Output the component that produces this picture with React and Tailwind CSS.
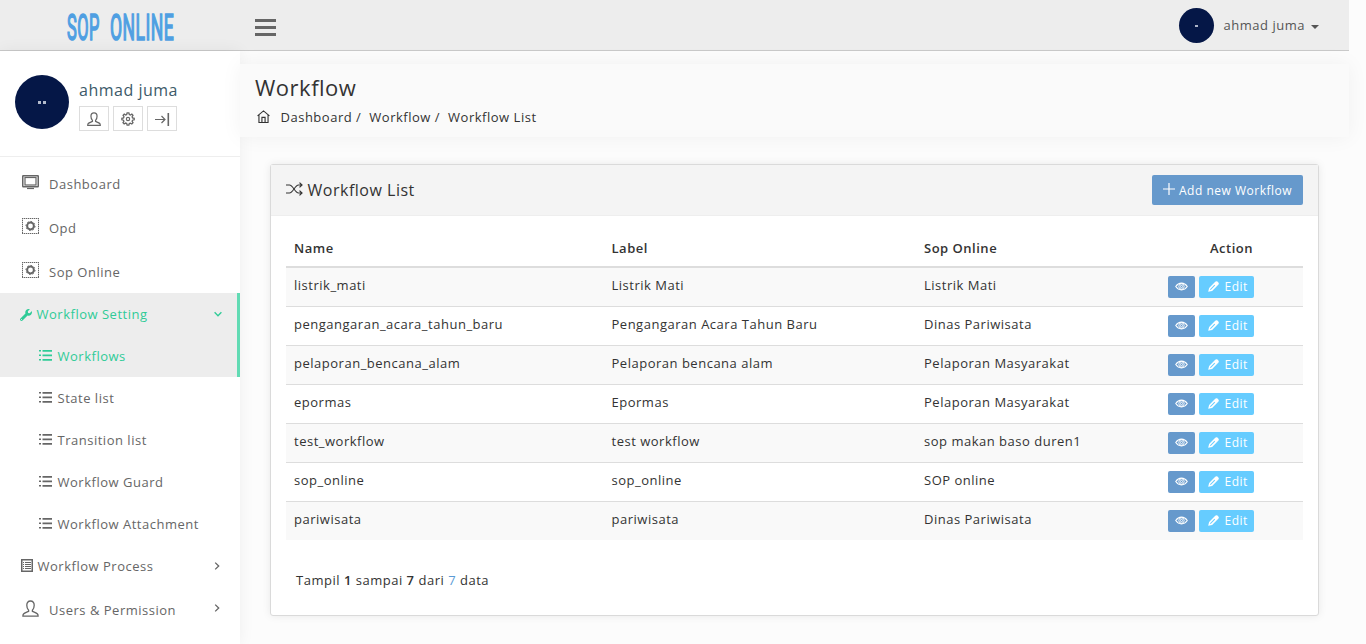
import React from "react";
import { FaWrench } from "react-icons/fa";

const stroke = {
  fill: "none",
  stroke: "currentColor",
  strokeLinecap: "butt",
  strokeLinejoin: "miter",
};

function UserIcon({ className, weight = 1.3 }) {
  return (
    <svg viewBox="0 0 17 17" className={className} {...stroke} strokeWidth={weight}>
      <path d="M6.600 10.200C5.200 8.800 4.800 7 4.800 5.200 4.800 2.600 6 1 8.500 1s3.700 1.600 3.700 4.200c0 1.800-.4 3.600-1.800 5v1.200c1.800.9 4 1.500 5.100 2.600.5.500.6 1.300.6 2.200H.9c0-.9.1-1.700.6-2.200 1.100-1.100 3.300-1.700 5.100-2.600z" />
    </svg>
  );
}

function GearIcon({ className }) {
  return (
    <svg viewBox="0 0 16 16" className={className} {...stroke} strokeWidth="1.500">
      <path d="M7 1h2l.5 1.900 1.200.5 1.700-1 1.300 1.300-1 1.700.5 1.300 1.900.5v1.700l-1.900.5-.5 1.200 1 1.700-1.300 1.400-1.700-1-1.200.5L9 15H7l-.5-1.900-1.200-.5-1.700 1-1.300-1.300 1-1.700-.5-1.200L1 8.900V7.200l1.900-.5.5-1.300-1-1.700 1.300-1.300 1.700 1 1.100-.5z" />
      <circle cx="8" cy="8" r="1.900" strokeWidth="1.300" />
    </svg>
  );
}

function ExitIcon({ className }) {
  return (
    <svg viewBox="0 0 16 14" className={className} {...stroke} strokeWidth="1.200">
      <path d="M1 7.500h10M7.500 4l3.500 3.500L7.500 11" />
      <path d="M14.300 1v13" strokeWidth="1.600" />
    </svg>
  );
}

function MonitorIcon({ className }) {
  return (
    <svg viewBox="0 0 17 15" className={className} {...stroke}>
      <rect x=".75" y=".75" width="15.500" height="11" rx=".5" strokeWidth="1.500" />
      <rect x="3" y="2.500" width="11" height="7.500" strokeWidth="1.200" />
      <path d="M5 13.500h7" strokeWidth="1.200" />
    </svg>
  );
}

function StampIcon({ className }) {
  return (
    <svg viewBox="0 0 17 16" className={className} {...stroke}>
      <path d="M0 .5h17M0 15.500h17M.5 0v16M16.500 0v16" strokeWidth="1" strokeOpacity=".35" />
      <path d="M0 .5h17M0 15.500h17M.5 0v16M16.500 0v16" strokeWidth="1" strokeDasharray="1 1" />
      <circle cx="8.500" cy="8" r="3.400" strokeWidth="2" />
      <circle cx="8.500" cy="8" r="4.600" strokeWidth="1" strokeDasharray="1.500 2.034" />
    </svg>
  );
}

function ListIcon({ className }) {
  return (
    <svg viewBox="0 0 13 11" className={className} fill="currentColor">
      <path d="M0 0h2v1.600H0zM3.500 0H13v1.700H3.500zM0 4.500h2v1.600H0zM3.500 4.500H13v1.700H3.500zM0 9h2v1.600H0zM3.500 9H13v1.700H3.500z" />
    </svg>
  );
}

function TableIcon({ className }) {
  return (
    <svg viewBox="0 0 12 13" className={className} {...stroke}>
      <rect x=".75" y=".75" width="10.500" height="11.500" strokeWidth="1.500" />
      <path d="M2 3.500h1m1 0h6M2 5.500h1m1 0h6M2 7.500h1m1 0h6M2 9.500h1m1 0h6" strokeWidth="1.200" />
    </svg>
  );
}

function HomeIcon({ className }) {
  return (
    <svg viewBox="0 0 14 14" className={className} {...stroke} strokeWidth="1.200">
      <path d="M.6 6.300L7 1l6.400 5.300M2.100 5.200v8.200h9.800V5.200M5.300 13V8h3.400v5" />
    </svg>
  );
}

function ShuffleIcon({ className }) {
  return (
    <svg viewBox="0 0 17 14" className={className} {...stroke} strokeWidth="1.200">
      <path d="M0 3h3.500c3.500 0 5.500 8 9 8H16M0 11h3.500c3.500 0 5.500-8 9-8H16M13.500.6L16 3l-2.500 2.400M13.500 8.600L16 11l-2.500 2.400" />
    </svg>
  );
}

function EyeIcon({ className }) {
  return (
    <svg viewBox="0 0 14 9" className={className} {...stroke} strokeWidth="1.200">
      <path d="M.8 4.500C2.300 2.200 4.500.9 7 .9s4.700 1.300 6.200 3.600C11.700 6.800 9.500 8.100 7 8.100S2.300 6.800.8 4.500z" />
      <circle cx="7" cy="4.500" r="2.900" strokeWidth="1" />
      <circle cx="7" cy="4.500" r="1.200" strokeWidth="1" />
    </svg>
  );
}

function PencilIcon({ className }) {
  return (
    <svg viewBox="0 0 12 12" className={className} fill="currentColor">
      <path fillRule="evenodd" d="M.2 11.800L1.200 7.500 7.900.8c.8-.8 1.900-.8 2.600-.1l.8.8c.7.7.7 1.800-.1 2.600l-6.700 6.700zM2.500 8.800l-.3 1 1-.3 4.600-4.600-.8-.8z" />
    </svg>
  );
}

function Chevron({ className }) {
  return (
    <svg viewBox="0 0 8 8" className={className} {...stroke} strokeWidth="1.300">
      <path d="M2.200.6L5.700 4 2.200 7.400" />
    </svg>
  );
}

const mainItems = [
  { label: "Dashboard", Icon: MonitorIcon, icon: "h-[15px] w-[17px]" },
  { label: "Opd", Icon: StampIcon, icon: "h-4 w-[17px]" },
  { label: "Sop Online", Icon: StampIcon, icon: "h-4 w-[17px]" },
];

const subItems = ["State list", "Transition list", "Workflow Guard", "Workflow Attachment"];

const rows = [
  ["listrik_mati", "Listrik Mati", "Listrik Mati"],
  ["pengangaran_acara_tahun_baru", "Pengangaran Acara Tahun Baru", "Dinas Pariwisata"],
  ["pelaporan_bencana_alam", "Pelaporan bencana alam", "Pelaporan Masyarakat"],
  ["epormas", "Epormas", "Pelaporan Masyarakat"],
  ["test_workflow", "test workflow", "sop makan baso duren1"],
  ["sop_online", "sop_online", "SOP online"],
  ["pariwisata", "pariwisata", "Dinas Pariwisata"],
];

const grid = "grid grid-cols-[317.500px_312.500px_244px_143px]";

function Header() {
  return (
    <header className="flex h-[51px] w-[1349px] shrink-0 border-b border-[#c9c9c9] bg-[#ededed]">
      <div className="flex w-[255px] pl-[67px] pt-[10px] font-['Roboto',sans-serif] text-[36px] leading-[36px] tracking-[1px] text-[#4f9fe2] [-webkit-text-stroke:1.700px_#4f9fe2]">
        <span className="w-[43px]">
          <span className="inline-block origin-left scale-x-[0.456]">SOP</span>
        </span>
        <span className="w-[66px]">
          <span className="inline-block origin-left scale-x-[0.487]">ONLINE</span>
        </span>
      </div>
      <div className="flex flex-col gap-1 pt-[19px]">
        <span className="h-[3px] w-[21px] bg-[#666]" />
        <span className="h-[3px] w-[21px] bg-[#666]" />
        <span className="h-[3px] w-[21px] bg-[#666]" />
      </div>
      <div className="ml-auto flex h-[51px] items-center pr-[30px] text-[#555]">
        <div className="flex size-[35px] items-center justify-center rounded-full bg-[#051747]">
          <span className="h-[2px] w-[3px] bg-[#aeb5c8]" />
        </div>
        <span className="ml-[9.500px]">ahmad juma</span>
        <span className="ml-[6px] mt-[3px] border-x-4 border-t-4 border-x-transparent border-t-[#555]" />
      </div>
    </header>
  );
}

function Sidebar() {
  return (
    <aside className="w-60 shrink-0 bg-white text-[#666] shadow-[0_0_15px_rgba(0,0,0,0.06)]">
      <div className="flex h-[106px] border-b border-[#eee] pl-[15px] pt-6">
        <div className="flex size-[54px] items-center justify-center gap-[2px] rounded-full bg-[#051747]">
          <span className="size-[3px] bg-[#b4bbcc]" />
          <span className="size-[3px] bg-[#b4bbcc]" />
        </div>
        <div className="ml-[10px]">
          <div className="h-[31px] pt-1 text-[16px] leading-[22px] text-[#3d5a69]">ahmad juma</div>
          <div className="flex gap-1">
            <span className="flex h-[25px] w-[30px] items-center justify-center border border-[#ddd]"><UserIcon className="mt-px size-[14px]" weight={1.5} /></span>
            <span className="flex h-[25px] w-[30px] items-center justify-center border border-[#ddd]"><GearIcon className="mt-px size-[14px]" /></span>
            <span className="flex h-[25px] w-[30px] items-center justify-center border border-[#ddd]"><ExitIcon className="h-[14px] w-4" /></span>
          </div>
        </div>
      </div>
      <nav className="pt-[5px]">
        {mainItems.map(({ label, Icon, icon }) => (
          <a key={label} className="flex h-11 items-center pl-[22px]">
            <Icon className={`${icon} -mt-1`} />
            <span className="ml-[10px]">{label}</span>
          </a>
        ))}
        <div className="-mt-px border-r-[3px] border-[#62dbb4] bg-[#ededed] text-[#2fcb97]">
          <a className="flex h-[42px] items-center pl-5">
            <FaWrench className="mt-[2px] size-3" />
            <span className="ml-[4.500px]">Workflow Setting</span>
            <Chevron className="ml-auto mr-[15px] size-2 rotate-90" />
          </a>
          <a className="flex h-[42px] items-center pl-[39px]">
            <ListIcon className="-mt-[2px] h-[11px] w-[13px]" />
            <span className="ml-[5.500px]">Workflows</span>
          </a>
        </div>
        {subItems.map((label) => (
          <a key={label} className="flex h-[42px] items-center pl-[39px]">
            <ListIcon className="-mt-[2px] h-[11px] w-[13px]" />
            <span className="ml-[5.500px]">{label}</span>
          </a>
        ))}
        <a className="flex h-[42px] items-center pl-[21px] pr-[19px]">
          <TableIcon className="-mt-px h-[13px] w-3" />
          <span className="ml-[4.500px]">Workflow Process</span>
          <Chevron className="-mt-px ml-auto size-2" />
        </a>
        <a className="mt-px flex h-11 items-center pl-[22px] pr-[19px]">
          <UserIcon className="-mt-1 size-[17px]" />
          <span className="ml-[10px]">{"Users & Permission"}</span>
          <Chevron className="-mt-1 ml-auto size-2" />
        </a>
      </nav>
    </aside>
  );
}

function WorkflowTable() {
  return (
    <div className="px-[15px] pt-[14px]">
      <div className={`${grid} h-[38px] items-center border-b-2 border-[#ddd] font-semibold`}>
        <span className="pl-2">Name</span>
        <span className="pl-2">Label</span>
        <span className="pl-2">Sop Online</span>
        <span className="text-center">Action</span>
      </div>
      {rows.map(([name, label, sop], i) => (
        <div key={name} className={`${grid} ${i < rows.length - 1 ? "h-[39px] border-b" : "h-[38px]"} border-[#ddd] ${i % 2 === 0 ? "bg-[#f9f9f9]" : ""}`}>
          <span className="pl-2 pt-[8px]">{name}</span>
          <span className="pl-2 pt-[8px]">{label}</span>
          <span className="pl-2 pt-[8px]">{sop}</span>
          <span className="flex gap-1 pl-2 pt-[8px] text-white">
            <button className="flex h-[22px] w-[27px] items-center justify-center rounded-[2px] bg-[#6699cc]"><EyeIcon className="-mt-[2px] h-[9px] w-[13px]" /></button>
            <button className="flex h-[22px] w-[55px] items-center rounded-[2px] bg-[#66ccff] pl-[9px] text-[12px]"><PencilIcon className="-mt-[2px] size-[11px]" /><span className="ml-[5.500px] mt-px">Edit</span></button>
          </span>
        </div>
      ))}
    </div>
  );
}

export default function App() {
  return (
    <div className="flex h-[644px] flex-col overflow-hidden bg-[#fcfcfc] font-['Open_Sans',sans-serif] text-[13px] leading-[18.500px] tracking-[0.51px] text-[#333]">
      <Header />
      <div className="flex min-h-0 w-[1349px] flex-1">
        <Sidebar />
        <main className="flex-1 pt-[13px]">
          <div className="h-[73px] bg-[#fafafa] pl-[15px] pt-[9px] shadow-[0_0_20px_rgba(0,0,0,0.05)]">
            <h1 className="text-[22px] leading-[28px]">Workflow</h1>
            <div className="flex items-center pl-[2px] pt-[7px]">
              <HomeIcon className="-mt-px size-[13px]" />
              <span className="ml-[10.500px]">Dashboard /</span>
              <span className="ml-[8px]">Workflow /</span>
              <span className="ml-[8px]">Workflow List</span>
            </div>
          </div>
          <section className="ml-[30px] mt-[27px] h-[452px] w-[1049px] rounded-[3px] border border-[#dadada] bg-white shadow-[0_0_8px_rgba(0,0,0,0.08)]">
            <div className="flex h-[51px] items-center justify-between border-b border-[#eee] bg-[#f4f4f4] px-[15px]">
              <h2 className="flex items-center text-[16px]"><ShuffleIcon className="-mt-[3px] h-[14px] w-[17px]" /><span className="ml-[4.500px]">Workflow List</span></h2>
              <button className="flex h-[30px] w-[151px] items-center rounded-[2px] bg-[#6699cc] pl-[11px] text-[12px] text-white">
                <svg viewBox="0 0 12 12" className="-mt-[2px] size-3" {...stroke} strokeWidth="1.200"><path d="M6 0v12M0 6h12" /></svg>
                <span className="ml-1 mt-[2px]">Add new Workflow</span>
              </button>
            </div>
            <WorkflowTable />
            <p className="pl-[25px] pt-[31px]">Tampil <b className="font-semibold">1</b> sampai <b className="font-semibold">7</b> dari <span className="text-[#5b9bd5]">7</span> data</p>
          </section>
        </main>
      </div>
    </div>
  );
}
